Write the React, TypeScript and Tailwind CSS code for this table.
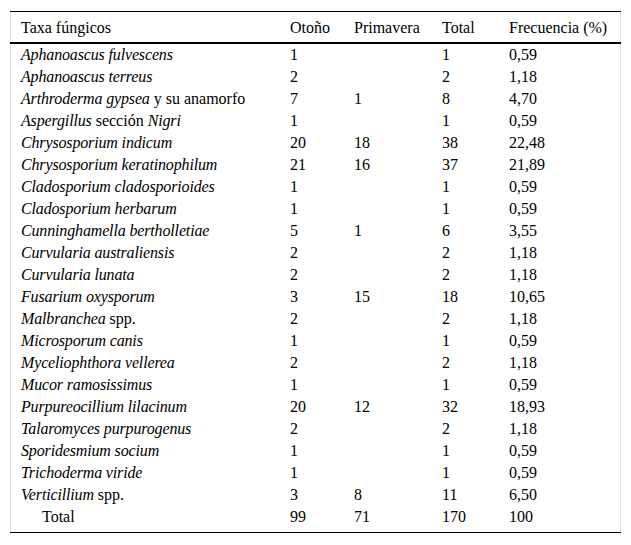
import React from 'react';

// the serif italic face is not installed here; an oblique keeps Liberation Serif
const I = ({ children }: { children: React.ReactNode }) => (
  <span className="[font-style:oblique_12deg] tracking-[-0.15px]">{children}</span>
);

type Row = {
  name: React.ReactNode;
  otono: string;
  primavera: string;
  total: string;
  freq: string;
};

const rows: Row[] = [
  { name: <I>Aphanoascus fulvescens</I>, otono: '1', primavera: '', total: '1', freq: '0,59' },
  { name: <I>Aphanoascus terreus</I>, otono: '2', primavera: '', total: '2', freq: '1,18' },
  { name: <><I>Arthroderma gypsea</I> y su anamorfo</>, otono: '7', primavera: '1', total: '8', freq: '4,70' },
  { name: <><I>Aspergillus</I> sección <I>Nigri</I></>, otono: '1', primavera: '', total: '1', freq: '0,59' },
  { name: <I>Chrysosporium indicum</I>, otono: '20', primavera: '18', total: '38', freq: '22,48' },
  { name: <I>Chrysosporium keratinophilum</I>, otono: '21', primavera: '16', total: '37', freq: '21,89' },
  { name: <I>Cladosporium cladosporioides</I>, otono: '1', primavera: '', total: '1', freq: '0,59' },
  { name: <I>Cladosporium herbarum</I>, otono: '1', primavera: '', total: '1', freq: '0,59' },
  { name: <I>Cunninghamella bertholletiae</I>, otono: '5', primavera: '1', total: '6', freq: '3,55' },
  { name: <I>Curvularia australiensis</I>, otono: '2', primavera: '', total: '2', freq: '1,18' },
  { name: <I>Curvularia lunata</I>, otono: '2', primavera: '', total: '2', freq: '1,18' },
  { name: <I>Fusarium oxysporum</I>, otono: '3', primavera: '15', total: '18', freq: '10,65' },
  { name: <><I>Malbranchea</I> spp.</>, otono: '2', primavera: '', total: '2', freq: '1,18' },
  { name: <I>Microsporum canis</I>, otono: '1', primavera: '', total: '1', freq: '0,59' },
  { name: <I>Myceliophthora vellerea</I>, otono: '2', primavera: '', total: '2', freq: '1,18' },
  { name: <I>Mucor ramosissimus</I>, otono: '1', primavera: '', total: '1', freq: '0,59' },
  { name: <I>Purpureocillium lilacinum</I>, otono: '20', primavera: '12', total: '32', freq: '18,93' },
  { name: <I>Talaromyces purpurogenus</I>, otono: '2', primavera: '', total: '2', freq: '1,18' },
  { name: <I>Sporidesmium socium</I>, otono: '1', primavera: '', total: '1', freq: '0,59' },
  { name: <I>Trichoderma viride</I>, otono: '1', primavera: '', total: '1', freq: '0,59' },
  { name: <><I>Verticillium</I> spp.</>, otono: '3', primavera: '8', total: '11', freq: '6,50' },
];

const grid = 'grid grid-cols-[269px_64px_88px_67px_1fr]';

export default function App() {
  return (
    <div className="w-[631px] h-[545px] bg-white pt-[11px] pl-[10px] font-['Liberation_Serif',serif] text-[16px] text-black">
      <div className="w-[611px] border-t border-b border-black">
        <div className="border-x border-[#e2e2e2]">
          {/* header */}
          <div className={`${grid} h-[32px] pt-[5px] leading-[22px] border-b-2 border-black -mx-px px-px`}>
            <div className="pl-[10px]">Taxa fúngicos</div>
            <div className="pl-[10px]">Otoño</div>
            <div className="pl-[10px]">Primavera</div>
            <div className="pl-[10px]">Total</div>
            <div className="pl-[10px]">Frecuencia (%)</div>
          </div>

          <div className="pb-[4px]">
            {rows.map((r, i) => (
              <div key={i} className={`${grid} h-[22px] leading-[21px] whitespace-nowrap`}>
                <div className="pl-[10px]">{r.name}</div>
                <div className="pl-[10px]">{r.otono}</div>
                <div className="pl-[10px]">{r.primavera}</div>
                <div className="pl-[10px]">{r.total}</div>
                <div className="pl-[10px]">{r.freq}</div>
              </div>
            ))}
            <div className={`${grid} h-[22px] leading-[21px]`}>
              <div className="pl-[31px]">Total</div>
              <div className="pl-[10px]">99</div>
              <div className="pl-[10px]">71</div>
              <div className="pl-[10px]">170</div>
              <div className="pl-[10px]">100</div>
            </div>
          </div>
        </div>
      </div>
    </div>
  );
}
